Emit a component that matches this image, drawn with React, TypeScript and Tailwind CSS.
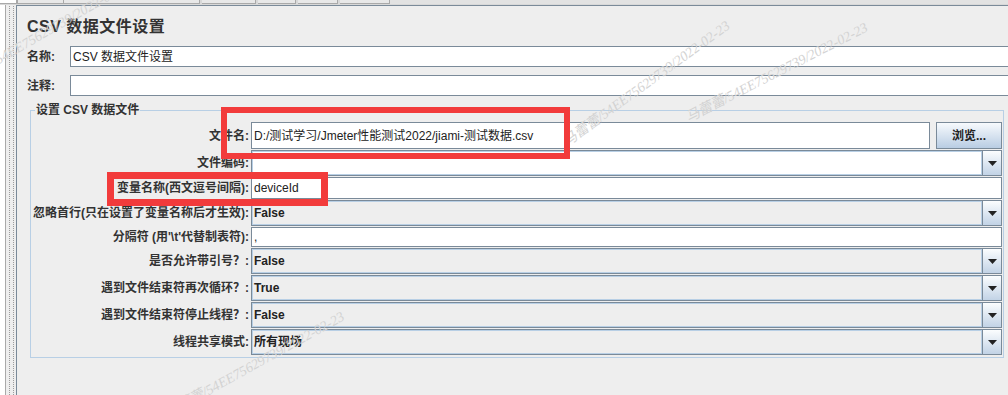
import clsx from "clsx";

const LABEL = "text-[12px] font-bold text-[#333] whitespace-nowrap";

function Arrow() {
  return (
    <div className="w-[19px] flex items-center justify-center border-l border-[#7a8a99] bg-gradient-to-b from-[#fbfdfe] to-[#c2d3e6]">
      <svg width="9" height="5" viewBox="0 0 9 5">
        <path d="M0 0h9L4.5 5z" fill="#222" />
      </svg>
    </div>
  );
}

function Combo({ value, editable }: { value?: string; editable?: boolean }) {
  return (
    <div className="h-[26px] flex border border-[#7a8a99]">
      <div
        className={clsx(
          "flex-1 flex items-center pl-[2px] text-[12px] font-bold text-[#222] shadow-[inset_0_0_0_1px_#b8cfe5]",
          editable ? "bg-white" : "bg-[#eeeeee]"
        )}
      >
        {value}
      </div>
      <Arrow />
    </div>
  );
}

function TextField({ value, h, className }: { value?: string; h: string; className?: string }) {
  return (
    <div
      className={clsx(
        "flex items-center bg-white border border-[#7a8a99] pl-[2px] text-[12px] text-[#222]",
        h,
        className
      )}
    >
      {value}
    </div>
  );
}

// faint diagonal watermark that sits over the screenshot
function Watermark({ className }: { className: string }) {
  return (
    <span
      className={clsx(
        "absolute origin-bottom-left whitespace-nowrap font-['Liberation_Serif','Noto_Sans_CJK_SC',serif] italic text-[14px] leading-[14px] text-[#d3d3d3] pointer-events-none",
        className
      )}
    >
      马蕾蕾/54EE75629739/2022-02-23
    </span>
  );
}

export default function App() {
  const rows: { label: string; field: React.ReactNode }[] = [
    { label: "文件编码:", field: <Combo editable /> },
    { label: "变量名称(西文逗号间隔):", field: <TextField value="deviceId" h="h-[22px]" /> },
    { label: "忽略首行(只在设置了变量名称后才生效):", field: <Combo value="False" /> },
    { label: "分隔符 (用'\\t'代替制表符):", field: <TextField value="," h="h-[20px]" /> },
    { label: "是否允许带引号？:", field: <Combo value="False" /> },
    { label: "遇到文件结束符再次循环？:", field: <Combo value="True" /> },
    { label: "遇到文件结束符停止线程？:", field: <Combo value="False" /> },
    { label: "线程共享模式:", field: <Combo value="所有现场" /> },
  ];

  return (
    <div className="relative w-[1008px] h-[395px] overflow-hidden bg-[#eeeeee] flex flex-col font-['Liberation_Sans','Noto_Sans_CJK_SC',sans-serif]">
      {/* toolbar edge */}
      <div className="h-[5px] flex bg-[#d8d8d8]">
        <div className="w-[17px] h-[4px] bg-white border-r border-b border-[#a9a9a9]" />
        <div className="w-[47px] h-[4px] bg-[#e8e8e8] border-x border-b border-[#a9a9a9]" />
        <div className="w-[136px] h-[4px] bg-[#e8e8e8] border-r border-b border-[#a9a9a9]" />
        <div className="w-[54px] h-[4px] bg-[#e8e8e8] border-r border-b border-[#a9a9a9] ml-[2px]" />
        <div className="w-[38px] h-[4px] bg-[#e8e8e8] border-r border-b border-[#a9a9a9] ml-[2px]" />
        <div className="w-[40px] h-[4px] bg-[#e8e8e8] border-r border-b border-[#a9a9a9] ml-[2px]" />
        <div className="w-[50px] h-[4px] bg-[#e8e8e8] border-r border-b border-[#a9a9a9] ml-[2px]" />
        <div className="flex-1 h-[4px] bg-[#e2e2e2]" />
      </div>

      <div className="flex flex-1">
        {/* tree edge + splitter */}
        <div className="w-[6px] bg-white border-r border-[#a9a9a9]" />
        <div className="w-[10px] flex justify-center pt-px">
          <div className="w-[5px] border-x border-dotted border-[#9c9c9c]" />
        </div>

        {/* main panel */}
        <div className="flex-1 border-l border-t border-[#7a8a99] bg-[#eeeeee]">
          <div className="pl-[10px] pt-[11px]">
            <h1 className="text-[16px] leading-[20px] font-bold text-[#333] tracking-[0.5px]">
              CSV 数据文件设置
            </h1>
            <div className="mt-[9px] flex items-center">
              <span className={clsx(LABEL, "w-[43px]")}>名称:</span>
              <TextField value="CSV 数据文件设置" h="h-[21px]" className="flex-1 -mr-2" />
            </div>
            <div className="mt-[8px] flex items-center">
              <span className={clsx(LABEL, "w-[43px]")}>注释:</span>
              <TextField h="h-[21px]" className="flex-1 -mr-2" />
            </div>
          </div>

          <fieldset className="mt-[7px] ml-[13px] w-[974px] border border-[#b8cfe5] pr-px pb-[2px]">
            <legend className="ml-[4px] px-[1px] text-[12px] leading-[14px] font-bold text-[#333]">
              设置 CSV 数据文件
            </legend>
            <div className="mt-[5px] grid grid-cols-[218px_1fr] gap-x-[2px] gap-y-px items-center">
              <span className={clsx(LABEL, "text-right")}>文件名:</span>
              <div className="flex gap-[6px]">
                <TextField
                  value="D:/测试学习/Jmeter性能测试2022/jiami-测试数据.csv"
                  h="h-[27px]"
                  className="flex-1"
                />
                <button className="w-[66px] h-[27px] border border-[#7a8a99] bg-gradient-to-b from-[#f7fafd] to-[#b9cde3] text-[12px] font-bold text-[#222]">
                  浏览...
                </button>
              </div>
              {rows.map((r) => (
                <div key={r.label} className="contents">
                  <span className={clsx(LABEL, "text-right")}>{r.label}</span>
                  {r.field}
                </div>
              ))}
            </div>
          </fieldset>
        </div>
      </div>

      {/* watermarks */}
      <Watermark className="left-[-40px] top-[76px] -rotate-[30deg]" />
      <Watermark className="left-[569px] top-[135px] -rotate-[36deg]" />
      <Watermark className="left-[690px] top-[111px] -rotate-[27deg]" />
      <Watermark className="left-[170px] top-[406px] -rotate-[29deg]" />

      {/* annotation boxes */}
      <div className="absolute left-[221px] top-[107px] w-[349px] h-[52px] border-[6px] border-[#f23b3b]" />
      <div className="absolute left-[107px] top-[172px] w-[221px] h-[34px] border-[7px] border-[#f23b3b]" />
    </div>
  );
}
